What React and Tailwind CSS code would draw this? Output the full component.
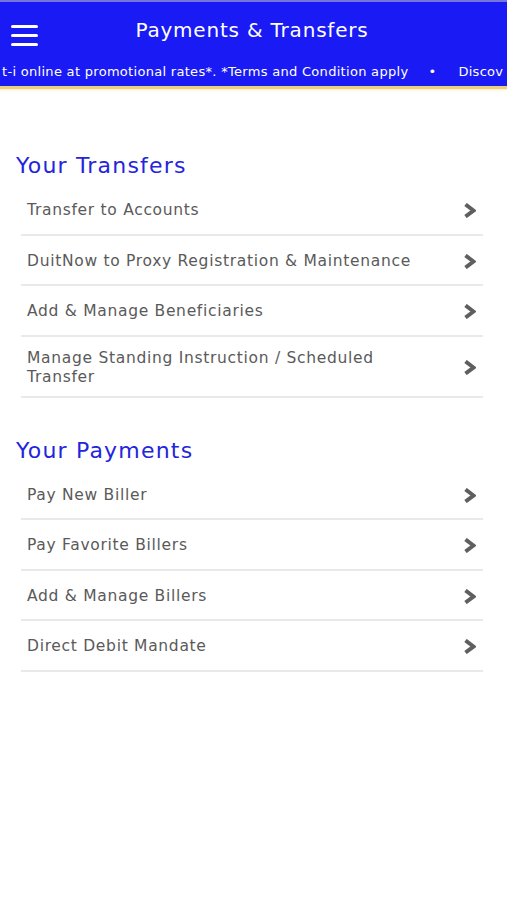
const transfers = [
  'Transfer to Accounts',
  'DuitNow to Proxy Registration & Maintenance',
  'Add & Manage Beneficiaries',
  'Manage Standing Instruction / Scheduled Transfer',
];

const payments = ['Pay New Biller', 'Pay Favorite Billers', 'Add & Manage Billers', 'Direct Debit Mandate'];

function Chevron() {
  return (
    <svg width="13" height="15" viewBox="0 0 13 15" className="shrink-0">
      <path d="M2.5 1.5 L10.5 7.5 L2.5 13.5" fill="none" stroke="#5f5f5f" strokeWidth="4" strokeLinejoin="miter" />
    </svg>
  );
}

function Row({ label }) {
  return (
    <li className="flex items-center justify-between border-b-2 border-[#e9e9e9] pl-[6px] pr-[7px] min-h-[50.5px] pt-[12px] pb-[9px]">
      <span className="text-[15.5px] leading-[19px] tracking-[0.7px] text-[#5a5a5a] max-w-[400px]">{label}</span>
      <Chevron />
    </li>
  );
}

function Section({ title, items, className }) {
  return (
    <section className={className}>
      <h2 className="px-4 h-[28px] leading-[28px] text-[22px] text-[#2424dc] tracking-[1.2px]">{title}</h2>
      <ul className="mt-[5px] ml-[21px] mr-[24px]">
        {items.map((item) => (
          <Row key={item} label={item} />
        ))}
      </ul>
    </section>
  );
}

export default function App() {
  return (
    <div className="w-[507px] min-h-[900px] bg-white" style={{ fontFamily: '"DejaVu Sans", sans-serif' }}>
      <header className="bg-[#1a1af5] border-t-2 border-[#7575dc]">
        <div className="flex items-start h-[56px] px-[11px]">
          <div className="flex flex-col gap-[6px] w-[27px] mt-[23px]">
            <span className="h-[3px] bg-white rounded" />
            <span className="h-[3px] bg-white rounded" />
            <span className="h-[3px] bg-white rounded" />
          </div>
          <h1 className="flex-1 text-center text-[20px] leading-[56px] text-white tracking-[0.8px] pr-[30px]">
            Payments &amp; Transfers
          </h1>
        </div>
        <div className="h-[28px] overflow-hidden whitespace-nowrap text-[13px] text-white tracking-[0.3px] leading-[28px] pl-[2px]">
          t-i online at promotional rates*. *Terms and Condition apply
          <span className="ml-[20px] mr-[22px]">•</span>
          Discov
        </div>
      </header>
      <div className="h-[3px] bg-[#e9d27a]" />
      <div className="h-[3px] bg-gradient-to-b from-[#fbf1d2] to-white" />
      <main>
        <Section title="Your Transfers" items={transfers} className="pt-[60px]" />
        <Section title="Your Payments" items={payments} className="pt-[39px]" />
      </main>
    </div>
  );
}
